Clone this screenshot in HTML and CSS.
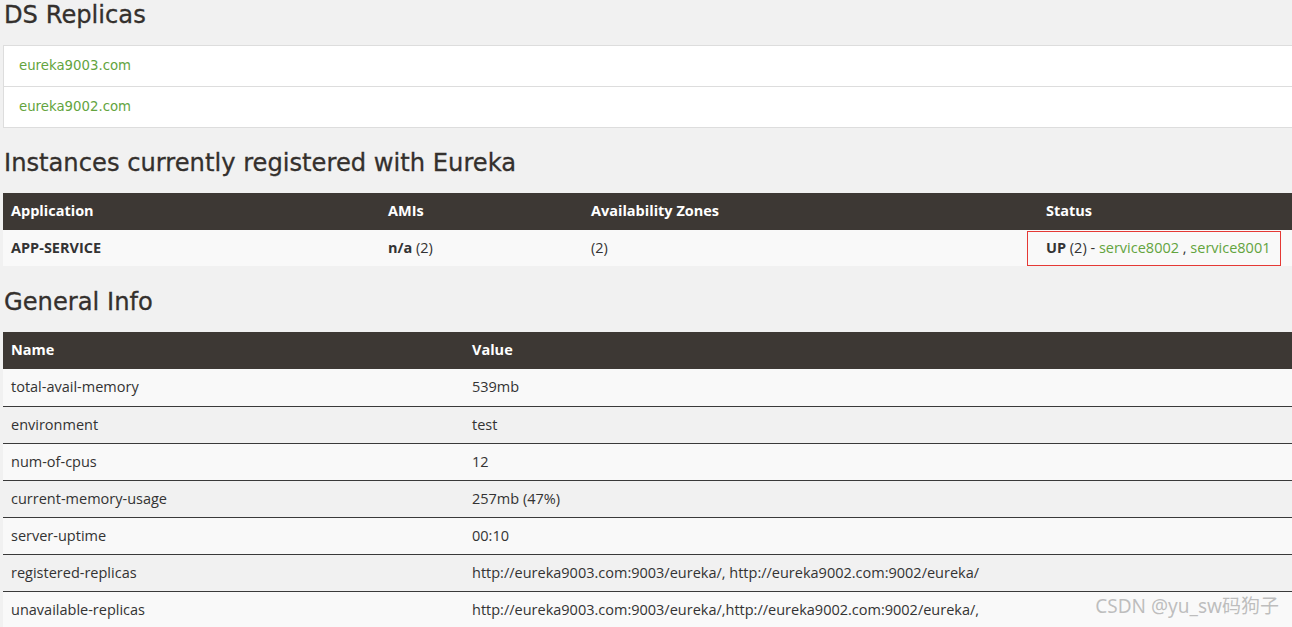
FILE: index.html
```html
<!DOCTYPE html>
<html>
<head>
<meta charset="utf-8">
<link rel="stylesheet" href="styles.css">
</head>
<body>
<div class="page">
  <h1 class="heading">DS Replicas</h1>
  <ul class="replicas">
    <li class="replica"><a class="link" href="#">eureka9003.com</a></li>
    <li class="replica"><a class="link" href="#">eureka9002.com</a></li>
  </ul>

  <h1 class="heading">Instances currently registered with Eureka</h1>
  <table class="grid instances">
    <thead>
      <tr>
        <th class="c-app">Application</th>
        <th class="c-ami">AMIs</th>
        <th class="c-az">Availability Zones</th>
        <th class="c-status">Status</th>
      </tr>
    </thead>
    <tbody>
      <tr>
        <td><b>APP-SERVICE</b></td>
        <td><b>n/a</b> (2)</td>
        <td>(2)</td>
        <td class="status-cell"><span class="mark"></span><b>UP</b> (2) - <a class="link" href="#">service8002</a> , <a class="link" href="#">service8001</a></td>
      </tr>
    </tbody>
  </table>

  <h1 class="heading">General Info</h1>
  <table class="grid info">
    <thead>
      <tr>
        <th class="c-name">Name</th>
        <th>Value</th>
      </tr>
    </thead>
    <tbody>
      <tr><td>total-avail-memory</td><td>539mb</td></tr>
      <tr><td>environment</td><td>test</td></tr>
      <tr><td>num-of-cpus</td><td>12</td></tr>
      <tr><td>current-memory-usage</td><td>257mb (47%)</td></tr>
      <tr><td>server-uptime</td><td>00:10</td></tr>
      <tr><td>registered-replicas</td><td>http://eureka9003.com:9003/eureka/, http://eureka9002.com:9002/eureka/</td></tr>
      <tr><td>unavailable-replicas</td><td>http://eureka9003.com:9003/eureka/,http://eureka9002.com:9002/eureka/,</td></tr>
    </tbody>
  </table>
</div>
<div class="watermark">CSDN @yu_sw码狗子</div>
</body>
</html>
```

FILE: styles.css
```css
html, body {
  margin: 0;
  padding: 0;
  background: #f1f1f1;
  overflow: hidden;
}
body {
  width: 1292px;
  height: 627px;
  position: relative;
  font-family: "Open Sans", "Noto Sans", sans-serif;
  color: #333;
}
.page {
  width: 1300px;
  padding-left: 3px;
}
.heading {
  margin: 0;
  font-family: "DejaVu Sans", sans-serif;
  font-weight: normal;
  font-size: 24.2px;
  -webkit-text-stroke: 0.3px #34302d;
  color: #34302d;
  padding-left: 1px;
  height: 30px;
  line-height: 30px;
}
.replicas {
  list-style: none;
  margin: 15px 0 0 0;
  padding: 0;
  border: 1px solid #dddddd;
  background: #fff;
}
.replica {
  height: 40px;
  line-height: 40px;
  padding-left: 15px;
  font-family: "DejaVu Sans", sans-serif;
  font-size: 13.3px;
}
.replica + .replica {
  border-top: 1px solid #dddddd;
}
.replicas + .heading {
  margin-top: 20px;
}
.link {
  color: #63a43e;
  text-decoration: none;
}
.grid {
  border-collapse: collapse;
  width: 1300px;
  table-layout: fixed;
  font-size: 14.5px;
  margin-top: 15px;
}
.grid th {
  background: #3d3834;
  color: #fff;
  text-align: left;
  font-weight: bold;
  height: 37px;
  padding: 0 8px 3px;
  box-sizing: border-box;
}
.grid td {
  height: 37px;
  padding: 0 8px 1px;
  box-sizing: border-box;
  color: #333;
}
.grid tbody tr:nth-child(odd) {
  background: #f9f9f9;
}
.grid tbody tr:nth-child(even) {
  background: #f1f1f1;
}
.grid tbody tr + tr td {
  border-top: 1px solid #3a3a3a;
}
.instances td {
  height: 36px;
  padding-bottom: 2px;
}
.c-app { width: 377px; }
.c-ami { width: 203px; }
.c-az { width: 455px; }
.c-name { width: 461px; }
.status-cell {
  position: relative;
}
.mark {
  position: absolute;
  left: -11px;
  top: 1px;
  width: 252px;
  height: 33px;
  border: 1px solid #e53935;
}
.instances + .heading {
  margin-top: 21px;
}
.watermark {
  position: absolute;
  right: 13px;
  bottom: 8px;
  font-family: "Noto Sans", "Noto Sans CJK SC", sans-serif;
  font-size: 19px;
  color: rgba(130, 130, 130, 0.5);
}
```
